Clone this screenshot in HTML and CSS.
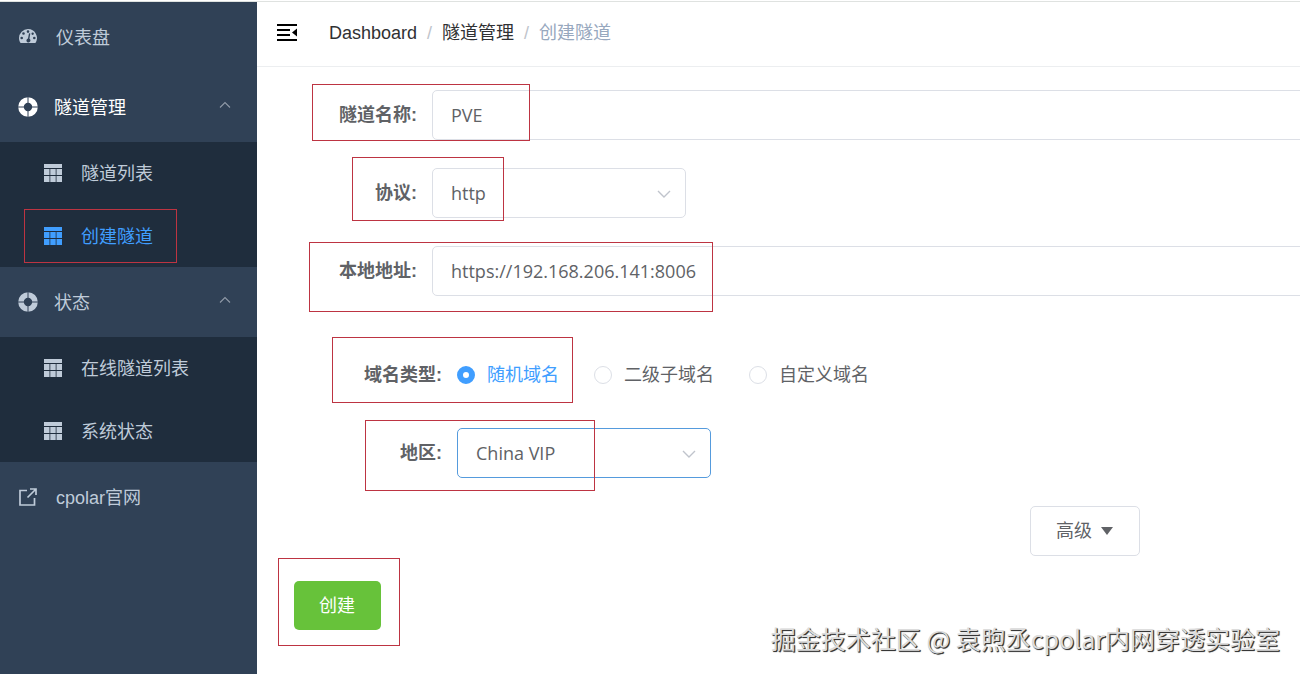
FILE: index.html
```html
<!DOCTYPE html>
<html lang="zh-CN">
<head>
<meta charset="utf-8">
<title>创建隧道</title>
<link rel="stylesheet" href="styles.css">
</head>
<body>
<svg class="sprite" aria-hidden="true">
  <symbol id="i-gauge" viewBox="0 0 18 18">
    <path fill-rule="evenodd" d="M9 1a9 9 0 0 0-9 9c0 1.800.5 3.500 1.400 4.700.2.300.4.300.7.300h13.800c.3 0 .5 0 .7-.3A9 9 0 0 0 9 1zM9 2.300a1.300 1.300 0 1 1 0 2.600 1.300 1.300 0 0 1 0-2.600zM4.500 4.200a1.300 1.300 0 1 1 0 2.600 1.300 1.300 0 0 1 0-2.600zM2.700 8.700a1.300 1.300 0 1 1 0 2.600 1.300 1.300 0 0 1 0-2.600zM15.300 8.700a1.300 1.300 0 1 1 0 2.600 1.300 1.300 0 0 1 0-2.600zM10 5.300l1.300.2-.9 5.200a2 2 0 1 1-1.400-.200zM13.700 4.500a1.200 1.200 0 1 1-.1 2.400 1.200 1.200 0 0 1 .1-2.400z"/>
  </symbol>
  <symbol id="i-help" viewBox="0 0 20 20">
    <circle cx="10" cy="10" r="7" fill="none" stroke="currentColor" stroke-width="5.600"/>
    <path class="cut" d="M10 0v6M10 14v6M0 10h6M14 10h6"/>
  </symbol>
  <symbol id="i-grid" viewBox="0 0 18 18">
    <path d="M0 0h18v4H0zM0 5h5.500v6H0zM6.300 5h5.400v6H6.300zM12.500 5H18v6h-5.500zM0 12h5.500v6H0zM6.300 12h5.400v6H6.300zM12.500 12H18v6h-5.500z"/>
  </symbol>
  <symbol id="i-link" viewBox="0 0 18 18">
    <path fill="none" stroke="currentColor" stroke-width="1.700" d="M8 2.500H1v14.500h14.500V10M8.500 9.500l8-8M11 1h6v6"/>
  </symbol>
  <symbol id="i-up" viewBox="0 0 12 8"><path fill="none" stroke="currentColor" stroke-width="1.100" d="M1 6.500l5-5 5 5"/></symbol>
  <symbol id="i-down" viewBox="0 0 14 8"><path fill="none" stroke="currentColor" stroke-width="1.400" d="M1 1l6 6 6-6"/></symbol>
</svg>
<div class="app">
  <nav class="sidebar">
    <a class="item" href="#"><svg class="icon"><use href="#i-gauge"/></svg><span class="text">仪表盘</span></a>
    <button class="item group current" type="button"><svg class="icon ring"><use href="#i-help"/></svg><span class="text">隧道管理</span><svg class="arrow"><use href="#i-up"/></svg></button>
    <div class="submenu">
      <a class="item sub" href="#"><svg class="icon"><use href="#i-grid"/></svg><span class="text">隧道列表</span></a>
      <a class="item sub active" href="#"><svg class="icon"><use href="#i-grid"/></svg><span class="text">创建隧道</span><span class="mark mark-menu"></span></a>
    </div>
    <button class="item group" type="button"><svg class="icon ring"><use href="#i-help"/></svg><span class="text">状态</span><svg class="arrow"><use href="#i-up"/></svg></button>
    <div class="submenu">
      <a class="item sub" href="#"><svg class="icon"><use href="#i-grid"/></svg><span class="text">在线隧道列表</span></a>
      <a class="item sub" href="#"><svg class="icon"><use href="#i-grid"/></svg><span class="text">系统状态</span></a>
    </div>
    <a class="item" href="#"><svg class="icon"><use href="#i-link"/></svg><span class="text">cpolar官网</span></a>
  </nav>
  <main class="main">
    <header class="topbar">
      <button class="fold" type="button" aria-label="菜单">
        <svg viewBox="0 0 20 18"><path d="M0 0h20v2H0zM0 5h13v2H0zM0 10h13v2H0zM0 15h20v2H0zM20 4.500v8L15 8.500z"/></svg>
      </button>
      <div class="crumbs">
        <a href="#">Dashboard</a><span class="sep">/</span><a href="#">隧道管理</a><span class="sep">/</span><span class="here">创建隧道</span>
      </div>
    </header>
    <form class="form">
      <div class="row">
        <label class="label" for="name">隧道名称:</label>
        <input class="box grow" id="name" type="text" value="PVE">
        <span class="mark mark-name"></span>
      </div>
      <div class="row">
        <label class="label" for="proto">协议:</label>
        <div class="pick">
          <select class="box" id="proto"><option>http</option></select>
          <svg class="caret"><use href="#i-down"/></svg>
        </div>
        <span class="mark mark-proto"></span>
      </div>
      <div class="row">
        <label class="label" for="addr">本地地址:</label>
        <input class="box grow" id="addr" type="text" value="https://192.168.206.141:8006">
        <span class="mark mark-addr"></span>
      </div>
      <div class="nested">
        <div class="row" role="radiogroup" aria-labelledby="kind">
          <span class="label" id="kind">域名类型:</span>
          <div class="radios">
            <label class="radio"><input type="radio" name="kind" checked><span>随机域名</span></label>
            <label class="radio"><input type="radio" name="kind"><span>二级子域名</span></label>
            <label class="radio"><input type="radio" name="kind"><span>自定义域名</span></label>
          </div>
          <span class="mark mark-kind"></span>
        </div>
        <div class="row">
          <label class="label" for="region">地区:</label>
          <div class="pick">
            <select class="box focus" id="region"><option>China VIP</option></select>
            <svg class="caret"><use href="#i-down"/></svg>
          </div>
          <span class="mark mark-region"></span>
        </div>
      </div>
      <button class="more" type="button">高级<svg viewBox="0 0 12 8"><path d="M0 0h12L6 8z"/></svg></button>
      <div class="actions">
        <button class="create" type="submit">创建</button>
        <span class="mark mark-create"></span>
      </div>
    </form>
  </main>
  <div class="watermark">掘金技术社区 @ 袁煦丞cpolar内网穿透实验室</div>
</div>
</body>
</html>
```
FILE: styles.css
```css
* { box-sizing: border-box; }

body {
  margin: 0;
  background: #fff;
  color: #606266;
  font: 18px/24px "Liberation Sans", "Noto Sans CJK SC", sans-serif;
}

button, input, select { font: inherit; color: inherit; }
a { color: inherit; text-decoration: none; }
svg { display: block; fill: currentColor; flex: none; }
.sprite { position: absolute; width: 0; height: 0; }

.app {
  position: relative;
  display: flex;
  min-height: 100vh;
  overflow: hidden;
  padding-top: 2px;
  background: linear-gradient(#fff 1px, #dfe2e0 1px, #dfe2e0 2px, #fff 2px);
}

/* Sidebar */
.sidebar {
  flex: none;
  width: 257px;
  background: #304156;
  color: #bfcbd9;
}

.item {
  position: relative;
  display: flex;
  align-items: center;
  gap: 19px;
  width: 100%;
  height: 70px;
  padding: 0 26px 0 19px;
  border: 0;
  background: none;
  text-align: left;
}

.item.group { gap: 16px; padding-left: 18px; }
.item.current { color: #fff; }
.item.sub { height: 62px; padding-left: 44px; }
.item.active { color: #409eff; }
.submenu { display: grid; gap: 1px; background: #1f2d3d; }

.text { padding-top: 2px; }
.icon { width: 18px; height: 18px; }
.icon.ring { width: 20px; height: 20px; }
.cut { stroke: #304156; stroke-width: 1; fill: none; }
.arrow { width: 12px; height: 8px; margin: 0 0 4px auto; color: #909aa8; }

/* Main area */
.main { flex: 1 0 1656px; }

.topbar {
  display: flex;
  align-items: center;
  gap: 32px;
  height: 65px;
  padding: 0 20px 3px;
  border-bottom: 1px solid #eceef0;
}

.fold { padding: 0; border: 0; background: none; color: #000; }
.fold svg { width: 20px; height: 18px; }
.crumbs { display: flex; color: #303133; }
.sep { margin: 0 10px; color: #c0c4cc; }
.here { color: #97a8be; }

.form {
  display: flex;
  flex-direction: column;
  gap: 28px;
  padding: 23px 25px;
}

.row { position: relative; display: flex; align-items: center; min-height: 50px; }
.label { width: 150px; padding-right: 15px; text-align: right; font-weight: 700; }

.box {
  width: 100%;
  height: 50px;
  padding: 0 18px;
  border: 1px solid #dcdfe6;
  border-radius: 5px;
  background: #fff;
  appearance: none;
  outline: 0;
  font-family: "Open Sans", "Noto Sans CJK SC", sans-serif;
}

.box.grow { flex: 1; }
.box.focus { border-color: #559bdd; }
.pick { position: relative; width: 254px; }

.caret {
  position: absolute;
  top: 22px;
  right: 15px;
  width: 14px;
  height: 8px;
  color: #c0c4cc;
  pointer-events: none;
}

.nested {
  display: flex;
  flex-direction: column;
  gap: 28px;
  padding: 26px 25px 0;
}

.radios { display: flex; gap: 35px; }
.radio { display: flex; align-items: center; gap: 12px; }

.radio input {
  width: 18px;
  height: 18px;
  margin: 0;
  border: 1px solid #dcdfe6;
  border-radius: 50%;
  appearance: none;
}

.radio input:checked { border: 6px solid #409eff; }
.radio input:checked + span { color: #409eff; }

.more {
  display: flex;
  align-items: center;
  align-self: center;
  gap: 9px;
  height: 50px;
  padding: 0 26px 0 25px;
  border: 1px solid #dcdfe6;
  border-radius: 5px;
  background: #fff;
}

.more svg { width: 12px; height: 8px; }

.actions { position: relative; align-self: flex-start; margin-top: -3px; padding-left: 12px; }

.create {
  display: block;
  height: 49px;
  padding: 0 26px 0 25px;
  border: 0;
  border-radius: 5px;
  background: #67c23a;
  color: #fff;
}

/* Highlight frames laid over the controls */
.mark { position: absolute; border: 1px solid #bd3442; pointer-events: none; }
.mark-menu { left: 24px; top: 4px; width: 153px; height: 54px; }
.mark-name { left: 30px; top: -6px; width: 218px; height: 57px; }
.mark-proto { left: 70px; top: -11px; width: 152px; height: 64px; }
.mark-addr { left: 27px; top: -4px; width: 404px; height: 70px; }
.mark-kind { left: 25px; top: -13px; width: 241px; height: 66px; }
.mark-region { left: 58px; top: -8px; width: 230px; height: 71px; }
.mark-create { left: -4px; top: -23px; width: 122px; height: 88px; }

.watermark {
  position: absolute;
  right: 20px;
  bottom: 18px;
  color: #dcdcdc;
  font: 25px/36px "Noto Sans CJK SC", sans-serif;
  text-shadow: 1px 1px 1px #333, 1px 1px 0 #555;
  white-space: nowrap;
}
```
